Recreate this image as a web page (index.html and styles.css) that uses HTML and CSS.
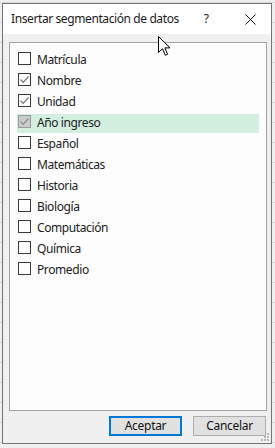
FILE: index.html
```html
<!DOCTYPE html>
<html lang="es">
<head>
<meta charset="utf-8">
<link rel="stylesheet" href="styles.css">
</head>
<body>
<div class="dialog">
  <div class="titlebar">
    <span class="title">Insertar segmentación de datos</span>
    <span class="help">?</span>
    <svg class="close" width="11" height="11" viewBox="0 0 11 11"><path d="M0.5 0.5 L10.5 10.5 M10.5 0.5 L0.5 10.5" stroke="#111" stroke-width="1" fill="none"/></svg>
  </div>
  <div class="content">
    <div class="list">
      <div class="row"><span class="box"></span><span class="label">Matrícula</span></div>
      <div class="row"><span class="box checked"><svg viewBox="0 0 11 11" width="11" height="11"><path d="M1.5 5.5 L4.2 8.3 L9.5 2.5" stroke="#777" stroke-width="1.2" fill="none"/></svg></span><span class="label">Nombre</span></div>
      <div class="row"><span class="box checked"><svg viewBox="0 0 11 11" width="11" height="11"><path d="M1.5 5.5 L4.2 8.3 L9.5 2.5" stroke="#777" stroke-width="1.2" fill="none"/></svg></span><span class="label">Unidad</span></div>
      <div class="row selected"><span class="box disabled"><svg viewBox="0 0 11 11" width="11" height="11"><path d="M1.5 5.5 L4.2 8.3 L9.5 2.5" stroke="#8a8a8a" stroke-width="1.2" fill="none"/></svg></span><span class="label">Año ingreso</span></div>
      <div class="row"><span class="box"></span><span class="label">Español</span></div>
      <div class="row"><span class="box"></span><span class="label">Matemáticas</span></div>
      <div class="row"><span class="box"></span><span class="label">Historia</span></div>
      <div class="row"><span class="box"></span><span class="label">Biología</span></div>
      <div class="row"><span class="box"></span><span class="label">Computación</span></div>
      <div class="row"><span class="box"></span><span class="label">Química</span></div>
      <div class="row"><span class="box"></span><span class="label">Promedio</span></div>
    </div>
    <div class="buttons">
      <button class="btn primary">Aceptar</button>
      <button class="btn">Cancelar</button>
    </div>
  </div>
  <svg class="grip" width="8" height="8" viewBox="0 0 8 8">
    <rect x="6" y="0" width="2" height="2" fill="#b8b8b8"/>
    <rect x="3" y="3" width="2" height="2" fill="#b8b8b8"/>
    <rect x="6" y="3" width="2" height="2" fill="#b8b8b8"/>
    <rect x="0" y="6" width="2" height="2" fill="#b8b8b8"/>
    <rect x="3" y="6" width="2" height="2" fill="#b8b8b8"/>
    <rect x="6" y="6" width="2" height="2" fill="#b8b8b8"/>
  </svg>
</div>
<svg class="cursor" width="14" height="21" viewBox="0 0 14 21">
  <path d="M0.5 0.5 L0.5 16.5 L4.5 12.7 L7.3 19.3 L9.6 18.3 L6.9 11.9 L12 11.9 Z" fill="#fff" stroke="#000" stroke-width="1" stroke-linejoin="miter"/>
</svg>
</body>
</html>
```
FILE: styles.css
```css
html, body {
  margin: 0;
  padding: 0;
}
body {
  width: 275px;
  height: 448px;
  overflow: hidden;
  position: relative;
  background-color: #efefef;
  background-image:
    linear-gradient(#d6d6d6 1px, transparent 1px);
  background-size: 100% 20px;
  background-position: 0 2px;
  font-family: "Segoe UI", "Noto Sans", "Open Sans", sans-serif;
  color: #1e1e1e;
  padding: 3px 0 0 2px;
  box-sizing: border-box;
}
.dialog {
  position: relative;
  width: 270px;
  height: 441px;
  box-sizing: border-box;
  border: 1px solid #747474;
  background: #f0f0f0;
  display: flex;
  flex-direction: column;
}
.titlebar {
  height: 30px;
  flex: none;
  background: #ffffff;
  display: flex;
  align-items: center;
  padding-left: 8px;
  padding-right: 15px;
  font-size: 12px;
}
.title {
  flex: 1;
  color: #1a1a1a;
  white-space: nowrap;
  padding-bottom: 1px;
  letter-spacing: -0.4px;
}
.help {
  font-size: 12px;
  margin-right: 36px;
  padding-bottom: 1px;
}
.close {
  display: block;
}
.content {
  flex: 1;
  display: flex;
  flex-direction: column;
  padding: 8px 4px 7px 6px;
}
.list {
  height: 369px;
  box-sizing: border-box;
  border: 1px solid #a3a3a3;
  background: #fdfdfd;
  padding: 8px 7px 0 7px;
  display: flex;
  flex-direction: column;
  gap: 2px;
}
.row {
  height: 19px;
  display: flex;
  align-items: center;
  padding-left: 1px;
  font-size: 12px;
}
.row.selected {
  background: #d3efdf;
}
.box {
  width: 13px;
  height: 13px;
  box-sizing: border-box;
  border: 1px solid #3a3a3a;
  background: #ffffff;
  flex: none;
  display: flex;
  align-items: center;
  justify-content: center;
  margin-top: -4px;
}
.box.disabled {
  background: #cccccc;
  border-color: #9a9a9a;
}
.box svg {
  display: block;
}
.label {
  margin-left: 6px;
  color: #222;
  white-space: nowrap;
  margin-top: -3px;
  letter-spacing: -0.4px;
}
.buttons {
  margin-top: 5px;
  display: flex;
  justify-content: flex-end;
  gap: 11px;
  padding-right: 1px;
}
.btn {
  width: 73px;
  height: 20px;
  box-sizing: border-box;
  border: 1px solid #adadad;
  background: #e1e1e1;
  font-family: inherit;
  font-size: 12px;
  color: #111;
  padding: 0;
  margin: 0;
  line-height: 16px;
  letter-spacing: -0.3px;
}
.btn.primary {
  border: 2px solid #0078d7;
}
.grip {
  position: absolute;
  right: 2px;
  bottom: 2px;
}
.cursor {
  position: absolute;
  left: 158px;
  top: 36px;
}
```
